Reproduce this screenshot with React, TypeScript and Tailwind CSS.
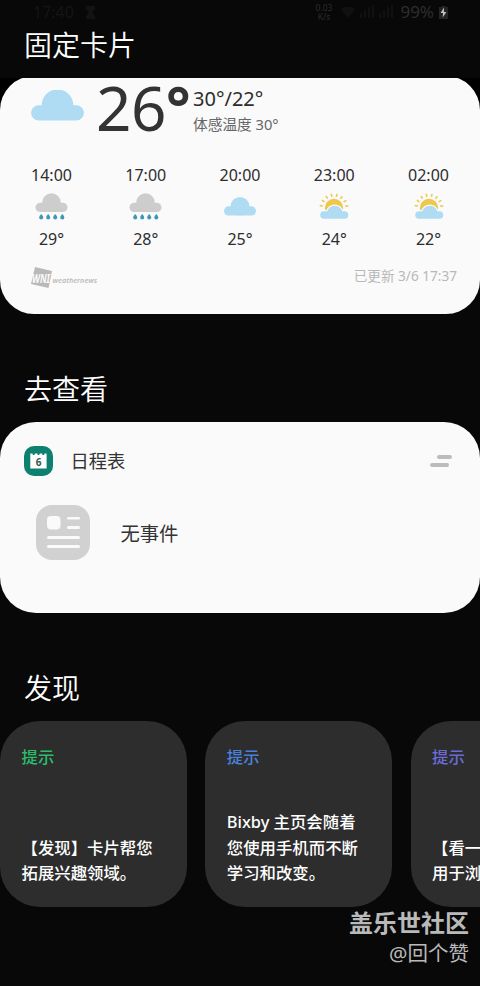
const hours = [
  { time: "14:00", icon: "rain", temp: "29°" },
  { time: "17:00", icon: "rain", temp: "28°" },
  { time: "20:00", icon: "cloud", temp: "25°" },
  { time: "23:00", icon: "sun", temp: "24°" },
  { time: "02:00", icon: "sun", temp: "22°" },
];

const tips = [
  { color: "text-[#2bbd6c]", lines: ["【发现】卡片帮您", "拓展兴趣领域。"] },
  { color: "text-[#4a80dc]", lines: ["Bixby 主页会随着", "您使用手机而不断", "学习和改变。"] },
  { color: "text-[#6a6bd6]", lines: ["【看一", "用于浏"] },
];

function WeatherIcon({ name }: { name: string }) {
  if (name === "rain") {
    return (
      <svg width="36" height="30" viewBox="0 0 36 30" aria-hidden="true">
        <g fill="#cdcdcd">
          <circle cx="17.500" cy="9.500" r="9.300" />
          <rect x="1.500" y="9.800" width="32" height="9.200" rx="4.600" />
        </g>
        <g fill="#3f97b8">
          {[7.2, 14.2, 21.2, 28.3].map((x) => (
            <path key={x} d={`M${x} 21c1.200 1.400 2 2.400 2 3.500a2 2 0 0 1-4 0c0-1.100.8-2.100 2-3.500z`} />
          ))}
        </g>
      </svg>
    );
  }
  if (name === "cloud") {
    return (
      <svg width="36" height="30" viewBox="0 0 36 30" fill="#b0dcf3" aria-hidden="true">
        <circle cx="18" cy="13.200" r="9.300" />
        <rect x="2" y="13.300" width="32" height="9.200" rx="4.600" />
      </svg>
    );
  }
  return (
    <svg width="36" height="30" viewBox="0 0 36 30" aria-hidden="true">
      <circle cx="18" cy="15" r="9.200" fill="#efc74b" />
      <g stroke="#edcb5e" strokeWidth="1.700" strokeLinecap="round">
        {[-80, -57, -34, -11, 12, 35, 58, 81].map((a) => (
          <path key={a} d="M18 3v-1.800" transform={`rotate(${a} 18 15)`} />
        ))}
      </g>
      <path
        d="M8 18.200h3.200c1.600-3.600 4.200-5.400 7.600-5.400s6 1.800 7.400 5.400h2.300a3.800 3.800 0 0 1 0 7.600H8a3.800 3.800 0 0 1 0-7.600z"
        fill="#b0dcf3"
        stroke="#fafafa"
        strokeWidth="2.400"
        paintOrder="stroke"
      />
    </svg>
  );
}

function StatusBar() {
  return (
    <div className="flex h-6 items-center pr-[32px] pl-[33px] text-[16px] text-[#151515]">
      <span>17:40</span>
      <svg className="ml-[11px]" width="11" height="13" viewBox="0 0 11 13" fill="#131313" aria-hidden="true">
        <path d="M1 0h9v3L7 6.500l3 3.500v3H1v-3l3-3.500L1 3z" />
      </svg>
      <span className="mr-[9px] ml-auto flex flex-col text-center text-[8.500px] leading-[9px] text-[#2c2c2c]">
        <span>0.03</span>
        <span>K/s</span>
      </span>
      <svg width="52" height="14" viewBox="0 0 52 14" fill="#111" aria-hidden="true">
        <path d="M0 4a11 11 0 0 1 14 0L7 13zM19 13V8h2v5zM23 13V5h2v8zM27 13V2h2v11zM31 13V0h2v13zM38 13V8h2v5zM42 13V5h2v8zM46 13V2h2v11zM50 13V0h2v13z" />
      </svg>
      <span className="ml-[7px] text-[17px] text-[#2d2d2d]">99%</span>
      <svg className="ml-[5px]" width="9" height="13" viewBox="0 0 9 13" aria-hidden="true">
        <path d="M2.500 0h4v1H9v12H0V1h2.500z" fill="#242424" />
        <path d="M5 1.500L1.600 7h2.500L3.600 11.500 7.400 6H4.900z" fill="#c4c4c4" />
      </svg>
    </div>
  );
}

export default function App() {
  return (
    <main className="relative h-[986px] w-[480px] overflow-hidden bg-[#080808] font-['Noto_Sans','Noto_Sans_CJK_SC',sans-serif] text-white">
      <header className="relative z-10 h-[78px] bg-[#080808]">
        <StatusBar />
        <h1 className="pl-6 text-[28px] leading-[43px] font-[350]">固定卡片</h1>
      </header>

      {/* the card is scrolled slightly under the header */}
      <div className="-mt-[2px] bg-linear-to-b from-black from-50% to-[#080808] to-50%">
        <section className="relative h-[238px] rounded-[34px] bg-[#fafafa] text-[#2d2d2d]">
          <div className="flex h-[88px] pt-[3px] pl-[31px]">
            <svg className="mt-[11px]" width="53" height="31" viewBox="0 0 53 31" fill="#b0dcf3" aria-hidden="true">
              <path d="M10.700 15.200a15.800 15.800 0 0 1 31.600 0h3a7.650 7.650 0 0 1 0 15.300H7.700a7.650 7.650 0 0 1 0-15.300z" />
            </svg>
            <div className="relative z-20 -mt-[2px] ml-[12px] flex h-[60px] text-[62px] leading-[60px] text-[#333]">
              <span className="tracking-[-0.500px]">26</span>
              <span className="text-[58px] leading-[57px] font-bold">°</span>
            </div>
            <div className="absolute left-[193px]">
              <p className="mt-[8px] text-[20px] leading-6">30°/22°</p>
              <p className="mt-[3px] text-[14.700px] leading-[20px] text-[#666]">体感温度 30°</p>
            </div>
          </div>

          <ul className="flex justify-between pr-[30px] pl-[30px]">
            {hours.map((h) => (
              <li key={h.time} className="flex w-[43px] flex-col items-center text-[16px] leading-[22px]">
                <span>{h.time}</span>
                <span className="mt-[7px] mb-[5px]">
                  <WeatherIcon name={h.icon} />
                </span>
                <span>{h.temp}</span>
              </li>
            ))}
          </ul>

          <div className="mt-[12px] flex items-center justify-between pr-[23px] pl-[31px]">
            <svg className="mt-[5px]" width="68" height="22" viewBox="0 0 68 22" aria-hidden="true">
              <path d="M4 0l17 4-3.500 17L0 17z" fill="#b9b9b9" />
              <text x="1" y="16" fontSize="12" fontWeight="700" fontStyle="italic" fill="#fafafa" textLength="18" lengthAdjust="spacingAndGlyphs">
                WNI
              </text>
              <text x="21.500" y="15.500" fontSize="7.500" fontWeight="600" fontStyle="italic" fill="#bcbcbc" textLength="44.500" lengthAdjust="spacingAndGlyphs">
                weathernews
              </text>
            </svg>
            <span className="pt-px text-[13.600px] text-[#b8b8b8]">已更新 3/6 17:37</span>
          </div>
        </section>
      </div>

      <h2 className="mt-[54px] pl-6 text-[28px] leading-[43px] font-[350]">去查看</h2>
      <section className="mt-[11px] h-[191px] rounded-[36px] bg-[#fafafa] pt-[23px] pl-6 text-[#333]">
        <div className="flex items-center pr-[28px]">
          <svg width="29" height="30" viewBox="0 0 29 30" aria-hidden="true">
            <rect width="29" height="30" rx="10" fill="#0e8070" />
            <path d="M6.300 7.500h2.200c0 2 2.400 2 2.400 0h2.400c0 2 2.400 2 2.400 0h2.400c0 2 2.400 2 2.400 0h2.100V22.500H6.300z" fill="#fff" />
            <text x="14.500" y="19.500" textAnchor="middle" fontSize="10" fontWeight="700" fill="#36584f">
              6
            </text>
          </svg>
          <h3 className="ml-[17.500px] pt-px text-[18.300px] leading-[30px]">日程表</h3>
          <svg className="ml-auto" width="22" height="12" viewBox="0 0 22 12" fill="#bcbcbc" aria-hidden="true">
            <rect x="7" width="15" height="4" rx="2" />
            <rect y="8" width="19" height="4" rx="2" />
          </svg>
        </div>
        <div className="mt-[29px] flex items-center pl-3">
          <svg width="54" height="55" viewBox="0 0 54 55" aria-hidden="true">
            <rect width="54" height="55" rx="16" fill="#d2d1d2" />
            <g fill="#fafafa">
              <rect x="11" y="11" width="13.500" height="13.500" rx="4" />
              <rect x="31" y="12" width="13" height="2.500" rx="1.200" />
              <rect x="31" y="21" width="13" height="3" rx="1.500" />
              <rect x="11" y="31" width="33" height="3" rx="1.500" />
              <rect x="11" y="40" width="33" height="3" rx="1.500" />
            </g>
          </svg>
          <p className="ml-[30.500px] pt-[3px] text-[19.300px]">无事件</p>
        </div>
      </section>

      <h2 className="mt-[54px] pl-6 text-[28px] leading-[42px] font-[350]">发现</h2>
      <div className="mt-[12px] flex gap-[18.300px]">
        {tips.map((tip) => (
          <article
            key={tip.color}
            className="flex h-[186px] w-[187px] shrink-0 flex-col justify-between rounded-[40px] bg-[#2d2d2d] pt-[23px] pb-[21px] pl-[21.500px] text-[16.400px] leading-[25.700px] font-medium whitespace-nowrap"
          >
            <h3 className={tip.color}>提示</h3>
            <div>
              {tip.lines.map((line) => (
                <p key={line}>{line}</p>
              ))}
            </div>
          </article>
        ))}
      </div>

      <footer className="pt-px pr-[11px] text-right text-[#b9b9b9]">
        <p className="text-[24px] leading-[30px] font-bold">盖乐世社区</p>
        <p className="text-[20.500px] leading-[30px]">@回个赞</p>
      </footer>
    </main>
  );
}
